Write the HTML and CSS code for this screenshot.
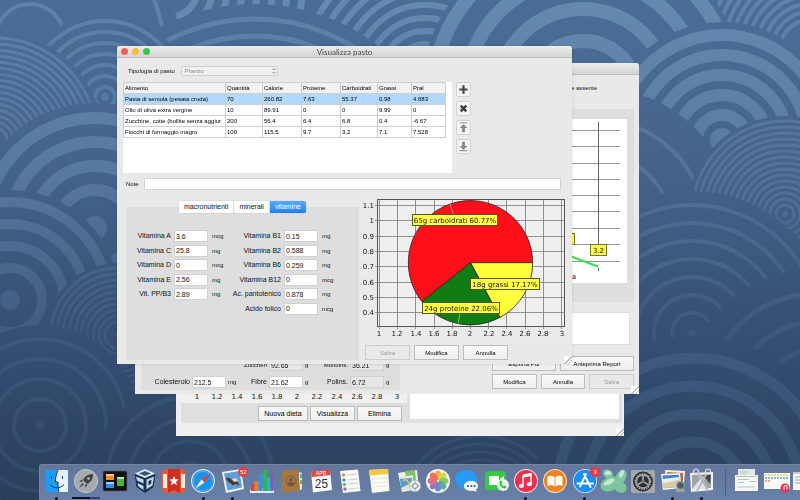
FILE: index.html
```html
<!DOCTYPE html>
<html lang="it">
<head>
<meta charset="utf-8">
<title>Visualizza pasto</title>
<link rel="stylesheet" href="styles.css">
</head>
<body>
<svg class="wallpaper" viewBox="0 0 800 500" preserveAspectRatio="xMidYMin slice" aria-hidden="true">
  <defs>
    <linearGradient id="sea" gradientUnits="userSpaceOnUse" x1="0" y1="0" x2="0" y2="500">
      <stop offset="0" stop-color="#4a6d98"/><stop offset=".35" stop-color="#446389"/><stop offset=".65" stop-color="#364f74"/><stop offset="1" stop-color="#293f5c"/>
    </linearGradient>
    <linearGradient id="foam" gradientUnits="userSpaceOnUse" x1="0" y1="0" x2="0" y2="500">
      <stop offset="0" stop-color="#6c91b5"/><stop offset=".35" stop-color="#5c7ea3"/><stop offset=".65" stop-color="#455f85"/><stop offset="1" stop-color="#34506f"/>
    </linearGradient>
  </defs>
  <rect width="800" height="500" fill="url(#sea)"/>
  <g id="waves"></g>
</svg>

<main class="desktop">

  <section class="window window-list" aria-label="Diete">
    <div class="list-body">
      <div class="list-left">
        <div class="axis-strip"><span>1</span><span>1.2</span><span>1.4</span><span>1.6</span><span>1.8</span><span>2</span><span>2.2</span><span>2.4</span><span>2.6</span><span>2.8</span><span>3</span></div>
        <div class="button-row list-buttons">
          <button class="btn btn-big btn-wide">Nuova dieta</button><button class="btn btn-big">Visualizza</button><button class="btn btn-big">Elimina</button>
        </div>
      </div>
      <div class="white-box list-box"></div>
    </div>
    <span class="grip"></span>
  </section>

  <section class="window window-diet" aria-label="Dieta">
    <header class="titlebar"></header>
    <p class="diet-note">Valore assente</p>
    <div class="diet-chart">
      <svg viewBox="0 0 80 164" role="img" aria-label="Andamento">
        <g stroke="#999" stroke-width="1"><path d="M0 11.500H73M0 27.500H73M0 44.500H73M0 60.500H73M0 76.500H73M0 92.500H73M0 109.500H73M0 125.500H73M0 142.500H73"/></g>
        <path d="M51.500 3V126M51.500 149v3" stroke="#666"/>
        <path d="M20 136 51 147.500" stroke="#2fe43f" stroke-width="2"/>
        <rect x="11.500" y="114.500" width="16" height="11" fill="#ffff46" stroke="#77772a"/>
        <rect x="43.500" y="125.500" width="16" height="11" fill="#ffff46" stroke="#77772a"/>
        <text x="51.500" y="134" class="tag-text">3.2</text>
        <text x="29" y="160" class="cat-text">Cena</text>
      </svg>
    </div>
    <div class="white-box diet-box"></div>
    <div class="diet-foot">
      <div class="diet-fields">
        <span></span><span></span><span></span>
        <label for="zuc">Zuccheri</label><input id="zuc" class="field off" value="92.65" readonly><span>g</span>
        <label for="mon">Monoins.</label><input id="mon" class="field off" value="36.21" readonly><span>g</span>
        <label for="col">Colesterolo</label><input id="col" class="field" value="212.5"><span>mg</span>
        <label for="fib">Fibre</label><input id="fib" class="field" value="21.62"><span>g</span>
        <label for="pol">Polins.</label><input id="pol" class="field off" value="6.72" readonly><span>g</span>
      </div>
      <div class="diet-actions">
        <div class="button-row"><button class="btn btn-grow">Esporta Pdf</button><button class="btn btn-report">Anteprima Report</button></div>
        <div class="button-row"><button class="btn btn-grow">Modifica</button><button class="btn btn-grow">Annulla</button><button class="btn btn-grow" disabled>Salva</button></div>
      </div>
    </div>
    <span class="grip"></span>
  </section>

  <section class="window window-meal" aria-label="Visualizza pasto">
    <header class="titlebar">
      <span class="lights"><i class="light red"></i><i class="light amber"></i><i class="light green"></i></span>
      <h1>Visualizza pasto</h1>
    </header>

    <div class="meal-type">
      <label for="tipo">Tipologia di pasto</label>
      <span class="select-wrap">
        <select id="tipo" disabled><option>Pranzo</option></select>
        <svg viewBox="0 0 6 8" aria-hidden="true"><path d="M1.500 3 3 1.500 4.500 3M1.500 5 3 6.500 4.500 5" fill="none" stroke="#888"/></svg>
      </span>
    </div>

    <div class="foods">
      <div class="table-pane">
        <table>
          <colgroup><col class="c-food"><col class="c-37"><col class="c-39"><col class="c-39"><col class="c-37"><col class="c-34"><col class="c-34"></colgroup>
          <thead><tr><th>Alimento</th><th>Quantità</th><th>Calorie</th><th>Proteine</th><th>Carboidrati</th><th>Grassi</th><th>Pral</th></tr></thead>
          <tbody>
            <tr class="selected"><td>Pasta di semola (pesata cruda)</td><td>70</td><td>260.82</td><td>7.63</td><td>55.37</td><td>0.98</td><td>4.683</td></tr>
            <tr><td>Olio di oliva extra vergine</td><td>10</td><td>89.91</td><td>0</td><td>0</td><td>9.99</td><td>0</td></tr>
            <tr><td>Zucchine, cotte (bollite senza aggiur</td><td>200</td><td>56.4</td><td>6.4</td><td>6.8</td><td>0.4</td><td>-6.67</td></tr>
            <tr><td>Fiocchi di formaggio magro</td><td>100</td><td>115.5</td><td>9.7</td><td>3.2</td><td>7.1</td><td>7.528</td></tr>
          </tbody>
        </table>
      </div>
      <div class="tools">
        <button class="tool" aria-label="Aggiungi"><svg viewBox="0 0 14 14"><path d="M7 2.500v9M2.500 7h9" stroke="#444" stroke-width="2.400"/></svg></button>
        <button class="tool" aria-label="Rimuovi"><svg viewBox="0 0 14 14"><path d="M4 4l6 6M10 4l-6 6" stroke="#3c3c3c" stroke-width="2.600"/></svg></button>
        <button class="tool" aria-label="Sposta in cima"><svg viewBox="0 0 14 14"><path d="M3 2h8" stroke="#888"/><path d="M7 3.500l4.200 4H8.500V12h-3V7.500H2.800z" fill="#888"/></svg></button>
        <button class="tool" aria-label="Sposta in fondo"><svg viewBox="0 0 14 14"><path d="M2.800 11.500h8.400" stroke="#777"/><path d="M7 10.500 2.800 6.500h2.700V2h3v4.500h2.700z" fill="#888"/></svg></button>
      </div>
    </div>

    <div class="note-row"><label for="note">Note</label><input id="note" type="text"></div>

    <div class="details">
      <div class="nutrients">
        <div class="tabs" role="tablist">
          <button role="tab" aria-selected="false">macronutrienti</button><button role="tab" aria-selected="false">minerali</button><button role="tab" aria-selected="true">vitamine</button>
        </div>
        <div class="tab-panel" role="tabpanel">
          <div class="vitamins">
            <label for="va">Vitamina A</label><input id="va" class="field" value="3.6"><span>mcg</span>
            <label for="vc">Vitamina C</label><input id="vc" class="field" value="25.8"><span>mg</span>
            <label for="vd">Vitamina D</label><input id="vd" class="field" value="0"><span>mcg</span>
            <label for="ve">Vitamina E</label><input id="ve" class="field" value="2.56"><span>mg</span>
            <label for="vp">Vit. PP/B3</label><input id="vp" class="field" value="2.89"><span>mg</span>
          </div>
          <div class="vitamins vitamins-b">
            <label for="b1">Vitamina B1</label><input id="b1" class="field" value="0.15"><span>mg</span>
            <label for="b2">Vitamina B2</label><input id="b2" class="field" value="0.588"><span>mg</span>
            <label for="b6">Vitamina B6</label><input id="b6" class="field" value="0.259"><span>mg</span>
            <label for="b12">Vitamina B12</label><input id="b12" class="field" value="0"><span>mcg</span>
            <label for="ap">Ac. pantotenico</label><input id="ap" class="field" value="0.878"><span>mg</span>
            <label for="af">Acido folico</label><input id="af" class="field" value="0"><span>mcg</span>
          </div>
        </div>
      </div>
      <div class="chart-side">
        <svg class="pie" viewBox="0 0 207 144" role="img" aria-label="Ripartizione dei macronutrienti">
          <rect width="207" height="144" fill="#eaeaea"/>
          <rect x="17.500" y="2.500" width="187" height="127" fill="#efefef" stroke="#555"/>
          <path d="M19.500 3v129M37.500 3v129M55.500 3v129M74.500 3v129M92.500 3v129M110.500 3v129M128.500 3v129M146.500 3v129M165.500 3v129M183.500 3v129M201.500 3v129M15 8.500h189M15 23.500h189M15 39.500h189M15 54.500h189M15 69.500h189M15 85.500h189M15 100.500h189M15 115.500h189" stroke="#777" stroke-width=".8" fill="none"/>
          <g stroke="#2a2020" stroke-width=".8">
            <path d="M110.500 65.700h62.200A62.200 62.200 0 1 0 62 104.700z" fill="#ff0f1a"/>
            <path d="M110.500 65.700h62.200A62.200 62.200 0 0 1 139.900 120.500z" fill="#ffff3c"/>
            <path d="M110.500 65.700 139.900 120.500A62.200 62.200 0 0 1 62 104.700z" fill="#107d12"/>
          </g>
          <path d="M90 7l4 12M100 116l-2 11M145 92l8 6" stroke="#fff" stroke-width=".6" opacity=".8"/>
          <g class="axis-y"><text x="14" y="11">1.1</text><text x="14" y="26">1</text><text x="14" y="42">0.9</text><text x="14" y="57">0.8</text><text x="14" y="72">0.7</text><text x="14" y="88">0.6</text><text x="14" y="103">0.5</text><text x="14" y="118">0.4</text></g>
          <g class="axis-x"><text x="19" y="139">1</text><text x="37" y="139">1.2</text><text x="56" y="139">1.4</text><text x="74" y="139">1.6</text><text x="92" y="139">1.8</text><text x="110" y="139">2</text><text x="129" y="139">2.2</text><text x="147" y="139">2.4</text><text x="165" y="139">2.6</text><text x="183" y="139">2.8</text><text x="202" y="139">3</text></g>
          <g fill="#ffff46" stroke="#55551c"><rect x="52.500" y="17.500" width="85" height="11"/><rect x="110.500" y="81.500" width="69" height="11"/><rect x="62.500" y="105.500" width="77" height="11"/></g>
          <g class="slice-text"><text x="95" y="26">65g carboidrati 60.77%</text><text x="145" y="90">18g grassi 17.17%</text><text x="101" y="114">24g proteine 22.06%</text></g>
        </svg>
        <div class="button-row meal-actions"><button class="btn" disabled>Salva</button><button class="btn">Modifica</button><button class="btn">Annulla</button></div>
      </div>
    </div>
    <span class="grip"></span>
  </section>
</main>

<nav class="dock" aria-label="Dock">
  <ul class="apps">
    <li class="running"><svg viewBox="0 0 24 24"><rect x="1" y="1" width="22" height="22" rx="1" fill="#e6f2fb"/><path d="M2 1h11c-2 4-2.600 8-2.600 12H13c0 4 .3 7 1 10H2a1 1 0 0 1-1-1V2a1 1 0 0 1 1-1z" fill="#1d9cf3"/><path d="M6.500 7v3M17.500 7v3M5 15.500c4 4.500 10 4.500 14 0M13 1.500c-2 4-2.600 8-2.600 11.500H13c0 4 .3 7 1 9.500" fill="none" stroke="#173b5c" stroke-width="1"/></svg></li>
    <li class="loading"><svg viewBox="0 0 24 24"><circle cx="12" cy="12" r="11.600" fill="#a6abb0" stroke="#d0d3d6" stroke-width=".8"/><path d="M19 5c-5 .2-8 2-10 6l4 4c4-2 6-5 6-10zM9 10.500l-4 1.800 3 .7zM13.500 15l-1.800 4-.8-3zM8.500 14 5 19l5-3.500z" fill="#3e4246"/><circle cx="14.500" cy="9.500" r="1.300" fill="#b5babd"/></svg></li>
    <li><svg viewBox="0 0 24 24"><rect x="0" y="2" width="24" height="20" rx="1" fill="#101214" stroke="#5b6570" stroke-width=".6"/><path d="M3 5h8v6H3z" fill="#f58e1f"/><path d="M3 13h8v6H3z" fill="#2e8de0"/><path d="M14 8h7v9h-7z" fill="#43b72f"/><path d="M3 5h8v2H3z" fill="#ffc681"/><path d="M3 13h8v2H3z" fill="#9bd2ff"/><path d="M14 8h7v2h-7z" fill="#b0ef9c"/></svg></li>
    <li><svg viewBox="0 0 24 24"><path d="M12 0 22.500 4.500 20.500 18 12 24 3.500 18 1.500 4.500z" fill="#17324f"/><path d="M12 0 22.500 4.500 12 9 1.500 4.500z" fill="#dfe9f1"/><path d="M12 2 18 4.500 12 7 6 4.500z" fill="#36577b"/><path d="M3 7.500l7.500 3v4L4 11.500zM4.500 14l6 3v4l-5-3.500zM21 7.500l-7.500 3v10l2-1.400 4-2.600zM15.500 12l3-1.300-.4 4-2.600 1.500z" fill="#c4d6e4" fill-rule="evenodd"/></svg></li>
    <li><svg viewBox="0 0 24 24"><rect width="24" height="24" rx="5" fill="#e85a35"/><path d="M1 5h4v14H1zM19 5h4v14h-4z" fill="#f8e9df"/><path d="M6 0h12v24l-6-3-6 3z" fill="#cf2f23"/><path d="M12 7l1.300 3.300 3.500.2-2.700 2.200.9 3.500-3-2-3 2 .9-3.500-2.700-2.200 3.500-.2z" fill="#fff"/></svg></li>
    <li class="running"><svg viewBox="0 0 24 24"><circle cx="12" cy="12" r="12" fill="#dde5eb"/><circle cx="12" cy="12" r="10.800" fill="#1e93e6"/><circle cx="12" cy="12" r="9.500" fill="none" stroke="#a8daf8" stroke-width="1" stroke-dasharray="1 1.500"/><path d="M20 4 13.500 13.500 10.500 10.500z" fill="#f03d31"/><path d="M4 20 10.500 10.500l3 3z" fill="#f4f6f8"/></svg></li>
    <li class="running"><svg viewBox="0 0 24 24"><path d="M1 3 20 0l3 20L5 24z" fill="#f1f3f4"/><path d="M3 4.500 18.500 2 21 18.500 6.500 21.500z" fill="#5d9ed6"/><path d="M5 9c3-1 5 1 6.500 2.500 2-1 3.500-.5 5 1.500l2 3.500-4-1.500-3 1.500-2-2.500-2.500-1z" fill="#4b3726"/><path d="M11 10l4-1 2 3-4 1z" fill="#e4dccb"/></svg><b class="badge">52</b></li>
    <li><svg viewBox="0 0 24 24"><path d="M0 21 2 19h20l2 3v2H0z" fill="#e9ecef"/><path d="M1 15h4v7H1z" fill="#e33f49"/><path d="M4.500 12h4v10h-4z" fill="#ef7b2d"/><path d="M8.500 5h4v17h-4z" fill="#3491e1"/><path d="M13 1h4v21h-4z" fill="#2fb652"/><path d="M17 9h3.500v13H17z" fill="#22b7c9"/><path d="M20.500 5H23v17h-2.500z" fill="#8652c4"/></svg></li>
    <li><svg viewBox="0 0 24 24"><path d="M20 3l3 1v16l-3 2z" fill="#e8e5d7"/><path d="M21 5h2v4h-2z" fill="#4fb1d5"/><path d="M21 11h2v4h-2z" fill="#7fb34c"/><path d="M3 1.500 19.500 0 21 22 4 24l-1.500-2z" fill="#a27846"/><circle cx="12" cy="12" r="5" fill="none" stroke="#7a5630" stroke-width=".9"/><circle cx="12" cy="10.500" r="1.800" fill="#7a5630"/><path d="M8.500 15c1-3 6-3 7 0-2 2.500-5 2.500-7 0z" fill="#7a5630"/></svg></li>
    <li><svg viewBox="0 0 24 24"><path d="M2 3 21 1l2 20-19 2.500z" fill="#f8f8f8"/><path d="M2 2.500 21 .5l.6 5.500-19 2z" fill="#e44a41"/><text class="cal-month" x="12" y="6">APR</text><text class="cal-day" x="12.500" y="19">25</text></svg></li>
    <li><svg viewBox="0 0 24 24"><path d="M2 2 20 .5 22.500 22 5 24z" fill="#fafafa"/><g stroke="#bbb" stroke-width=".7"><path d="M9 6l10-1M9.500 11l10-1M10 15l10-1M10.500 20l10-1"/></g><circle cx="5.500" cy="6" r="1.700" fill="#f28b2c"/><circle cx="6" cy="11" r="1.700" fill="#3f9be8"/><circle cx="6.500" cy="15.500" r="1.700" fill="#5ec34a"/><circle cx="7" cy="20" r="1.700" fill="#b15ad0"/></svg></li>
    <li><svg viewBox="0 0 24 24"><path d="M2 1 21 0l1.500 22L5 24z" fill="#faf9f3"/><path d="M2 1 21 0l.4 5L2.500 6.500z" fill="#f7c93a"/><path d="M4 10l17-1M4.500 14l17-1M5 18l17-1" stroke="#dedcd4" stroke-width=".6"/></svg></li>
    <li><svg viewBox="0 0 24 24"><path d="M1 4 20 1l2 19-17 3z" fill="#f2f0e8"/><path d="M8 2l10-1 1 10-10 2z" fill="#7ec267"/><path d="M2 8l14-2v14l-11 2z" fill="#e7e3d2"/><path d="M3 10l12-1-1 5-10 5z" fill="#4b9cdf"/><path d="M6 12c3-3 6 0 7 6" fill="none" stroke="#f0c03c" stroke-width="1.500"/><circle cx="18" cy="17" r="5.700" fill="#ecf0f1" stroke="#a5b0b6" stroke-width=".7"/><circle cx="18" cy="17" r="2.500" fill="none" stroke="#65808b" stroke-width=".9"/><path d="M18 12v3M18 19v3M13 17h3M20 17h3" stroke="#78919b" stroke-width=".6"/></svg></li>
    <li><svg viewBox="0 0 24 24"><circle cx="12" cy="12" r="12" fill="#f4f4f2"/><g opacity=".85"><ellipse cx="12" cy="6.300" rx="3.300" ry="4.800" fill="#f7a520"/><ellipse cx="12" cy="6.300" rx="3.300" ry="4.800" fill="#d4cf2d" transform="rotate(45 12 12)"/><ellipse cx="12" cy="6.300" rx="3.300" ry="4.800" fill="#7dc242" transform="rotate(90 12 12)"/><ellipse cx="12" cy="6.300" rx="3.300" ry="4.800" fill="#3ba683" transform="rotate(135 12 12)"/><ellipse cx="12" cy="6.300" rx="3.300" ry="4.800" fill="#4680c8" transform="rotate(180 12 12)"/><ellipse cx="12" cy="6.300" rx="3.300" ry="4.800" fill="#8662ae" transform="rotate(225 12 12)"/><ellipse cx="12" cy="6.300" rx="3.300" ry="4.800" fill="#d5597f" transform="rotate(270 12 12)"/><ellipse cx="12" cy="6.300" rx="3.300" ry="4.800" fill="#ed5a3b" transform="rotate(315 12 12)"/></g></svg></li>
    <li><svg viewBox="0 0 24 24"><path d="M11 1c6 0 11 4 11 9s-5 9-11 9c-1 0-2 0-3-.4L4 21l.6-4C2 15.500 0 13 0 10c0-5 5-9 11-9z" fill="#259bf5"/><path d="M16 12c4 0 7 2 7 5 0 1.600-.7 2.800-2 3.700l.4 2.300-2.600-1.300c-5 1-9.800-1-9.800-4.700 0-3 3-5 7-5z" fill="#f2f7fb"/><circle cx="13" cy="17" r="1.100" fill="#2c5f91"/><circle cx="16.300" cy="17" r="1.100" fill="#2c5f91"/><circle cx="19.600" cy="17" r="1.100" fill="#2c5f91"/></svg></li>
    <li><svg viewBox="0 0 24 24"><rect x="0" y="2" width="21" height="19" rx="4" fill="#32cb48"/><path d="M4 7h10v9H4zM15 10l4-3v8l-4-2z" fill="#fff"/><circle cx="18" cy="16" r="6" fill="#e9f7ea"/><path d="M15 12c-2 3 2 8 5.500 7.500l1-1.800-2-1.300-1.200.8c-1-.6-1.700-1.500-1.800-2.600l1-.8-.8-2z" fill="#30bd45"/></svg></li>
    <li class="running"><svg viewBox="0 0 24 24"><circle cx="12" cy="12" r="12" fill="#f4e8ec"/><circle cx="12" cy="12" r="11" fill="#ec2f4b"/><path d="M9 6.500l8-1.700v10.400" fill="none" stroke="#fff" stroke-width="1.500"/><path d="M9 5.800l8-1.700v3l-8 1.700z" fill="#fff"/><path d="M9 6.500V17" stroke="#fff" stroke-width="1.500"/><ellipse cx="7.300" cy="17" rx="2.500" ry="2" fill="#fff"/><ellipse cx="15.300" cy="15.300" rx="2.500" ry="2" fill="#fff"/></svg></li>
    <li><svg viewBox="0 0 24 24"><circle cx="12" cy="12" r="12" fill="#f3dfcb"/><circle cx="12" cy="12" r="11" fill="#f1831d"/><path d="M4.500 7.500C7 6.300 10 6.500 12 8.500c2-2 5-2.200 7.500-1v9.500c-2.500-1-5.500-1-7.500.8-2-1.800-5-1.800-7.500-.8z" fill="#fff"/><path d="M12 8.500v9" stroke="#f1831d" stroke-width=".9"/></svg></li>
    <li class="running"><svg viewBox="0 0 24 24"><circle cx="12" cy="12" r="12" fill="#d9ecfa"/><circle cx="12" cy="12" r="11.200" fill="#1c8df2"/><path d="M13 5 7 17.500M11 5l6.500 13M4.500 14.500H15M17.500 14.500h2.500" fill="none" stroke="#fff" stroke-width="1.900" stroke-linecap="round"/></svg><b class="badge">3</b></li>
    <li><svg viewBox="0 0 24 24"><g fill="#7ec49d"><ellipse cx="6" cy="5" rx="5.500" ry="4.300" transform="rotate(35 6 5)"/><ellipse cx="19" cy="8" rx="5" ry="8" transform="rotate(25 19 8)"/><ellipse cx="8" cy="15" rx="10" ry="7" transform="rotate(-25 8 15)"/><ellipse cx="18" cy="18" rx="7" ry="5.500" transform="rotate(28 18 18)"/></g><g fill="#c5e8d2"><ellipse cx="6" cy="4" rx="3" ry="2"/><ellipse cx="19.500" cy="5" rx="2" ry="4" transform="rotate(25 19.500 5)"/><ellipse cx="7" cy="13" rx="6" ry="2.500" transform="rotate(-25 7 13)"/></g></svg></li>
    <li><svg viewBox="0 0 24 24"><rect x="0" y="1" width="24" height="23" rx="1.500" fill="#a3a8ac"/><circle cx="12" cy="12.500" r="10" fill="#2d3033"/><circle cx="12" cy="12.500" r="7.500" fill="none" stroke="#babdbf" stroke-width="1.500" stroke-dasharray="1.500 .9"/><circle cx="12" cy="12.500" r="6.500" fill="none" stroke="#a5a9ac" stroke-width="1.300"/><path d="M12 12.500V6.500M12 12.500l-5 3M12 12.500l5 3" stroke="#c1c4c6" stroke-width="1.400"/><circle cx="12" cy="12.500" r="2" fill="#73787b"/></svg></li>
    <li class="running"><svg viewBox="0 0 24 24"><path d="M4 1l20 1-1 14-18 1z" fill="#f6eee0"/><path d="M6 3l16 1v11L6 15z" fill="#ad6d3e"/><path d="M0 5l19-1 1.500 15L2 21z" fill="#f3f5f5"/><path d="M1.500 6.500 17.800 5.700l1 12L3 19.300z" fill="#3f83ce"/><path d="M2 12l16-1 .8 6.700L3 19.300z" fill="#dccb9e"/><path d="M2 10l16-2v3L2 14z" fill="#e3f1fb"/><circle cx="19.500" cy="16.500" r="4.500" fill="#8b9092"/><circle cx="19.500" cy="16.500" r="3" fill="#4b5c66"/><path d="M15 20h9v3h-9z" fill="#9da19d"/></svg></li>
    <li class="running"><svg viewBox="0 0 24 24"><path d="M0 4l23-1v18L1 23z" fill="#f1f2f2"/><path d="M2 6l19-1v14L2 20z" fill="#a2a5a6"/><path d="M13 6h8l-1 9z" fill="#434749"/><path d="M2 20 12 8l4 12z" fill="#dde1e2"/><path d="M8 4l10 18M17 4 7 22" stroke="#d2d6d8" stroke-width="1.800"/><path d="M8 4l10 18M17 4 7 22" stroke="#6d7478" stroke-width=".5"/><circle cx="6" cy="2.500" r="2.500" fill="none" stroke="#dadddd" stroke-width="1.200"/><circle cx="18" cy="2.500" r="2.500" fill="none" stroke="#dadddd" stroke-width="1.200"/></svg></li>
  </ul>
  <ul class="files">
    <li><svg viewBox="0 0 24 24"><path d="M3 0h17v10H3z" fill="#e2e8e5"/><path d="M0 6h23v16H0z" fill="#f5f6f6"/><path d="M1 7h21v1H1zM3 10h11v1H3zM3 13h6v1H3zM15 12h6v1h-6z" fill="#b4c4ba"/><path d="M5 3h8M6 5h5M2 18h18" stroke="#a9bbb0" stroke-width=".8"/></svg></li>
    <li><svg viewBox="0 0 24 24"><path d="M0 4h26v16H0z" fill="#f7f8f8"/><path d="M1 6h24" stroke="#e5cb65" stroke-width="1.500" stroke-dasharray="2 1"/><path d="M1 9h24" stroke="#64a5c8" stroke-width="1.500" stroke-dasharray="2 1"/><path d="M1 12h5" stroke="#df9458" stroke-width="1.500" stroke-dasharray="2 1"/><circle cx="21" cy="19" r="4.500" fill="#e63450"/><path d="M20 21v-4l3-.5v4" fill="none" stroke="#fff" stroke-width=".9"/></svg></li>
    <li><svg viewBox="0 0 24 24"><path d="M0 3h24v18H0z" fill="#f4f5f5"/><path d="M0 3h24v2H0z" fill="#c7cacc"/><path d="M2 8h6M2 11h6M2 14h5" stroke="#a0a6ac"/></svg></li>
  </ul>
</nav>
<script src="waves.js"></script>
</body>
</html>
```
FILE: styles.css
```css
* { box-sizing: border-box; }
body {
  margin: 0;
  min-height: 100vh;
  overflow: hidden;
  background: #3a5478;
  color: #111;
  font: 6px/8px "Liberation Sans", Arial, sans-serif;
}
button, input, select { font: inherit; color: inherit; margin: 0; }
ul { list-style: none; margin: 0; padding: 0; }
svg { display: block; }

.wallpaper { position: fixed; inset: 0; width: 100%; height: 100%; }
.desktop { position: relative; min-height: 100vh; }

/* windows */
.window {
  position: absolute;
  display: flex;
  flex-direction: column;
  background: #e9e9e9;
  border-radius: 3px 3px 0 0;
}
.window-meal { left: 117px; top: 46px; width: 455px; height: 318px; box-shadow: 0 0 3px rgba(0, 0, 0, .15); }
.window-diet { left: 135px; top: 63px; width: 504px; height: 331px; }
.window-list { left: 176px; top: 110px; width: 448px; height: 326px; background: #efefef; }
.titlebar {
  flex: none;
  display: grid;
  grid-template-columns: 1fr auto 1fr;
  align-items: center;
  height: 12px;
  padding: 0 4px;
  border-bottom: 1px solid #bdbdbd;
  border-radius: 3px 3px 0 0;
  background: linear-gradient(#ececec, #d4d4d4);
}
.titlebar h1 { margin: 0; font: 400 8px/10px Lato, sans-serif; color: #444; }
.lights { display: flex; gap: 4px; }
.light { width: 7px; height: 7px; border-radius: 50%; }
.red { background: #f95c57; }
.amber { background: #f9bc40; }
.green { background: #34c64a; }
.grip {
  position: absolute;
  right: 0;
  bottom: 0;
  width: 8px;
  height: 8px;
  background: linear-gradient(135deg, #fff 50%, #bbb 50%, #bbb 58%, #fff 58%, #fff 70%, #bbb 70%, #bbb 78%, #fff 78%);
}

/* controls */
.btn {
  width: 45px;
  height: 15px;
  padding: 0;
  border: 1px solid #bcbcbc;
  border-radius: 0;
  background: linear-gradient(#fafafa, #eee);
  color: #000;
  white-space: nowrap;
}
.btn:disabled { color: #999; background: #e9e9e9; border-color: #cdcdcd; }
.btn-big { font-size: 7px; }
.btn-wide { width: 50px; }
.btn-grow { flex: 1; }
.btn-report { width: 74px; }
.button-row { display: flex; gap: 4px; }
.white-box { background: #fff; }
.field {
  width: 34px;
  height: 12px;
  padding: 0 0 0 1px;
  border: 1px solid #d0d0d0;
  border-radius: 0;
  background: #fff;
  font-size: 7px;
}
.field.off { background: #e7e7e7; }

/* meal window */
.meal-type { display: flex; align-items: center; gap: 6px; height: 10px; margin: 8px 0 6px 11px; }
.select-wrap { position: relative; width: 97px; }
.select-wrap select {
  display: block;
  appearance: none;
  width: 100%;
  height: 10px;
  padding: 0 3px;
  border: 1px solid #cfcfcf;
  border-radius: 2px;
  background: #f0f0f0;
  color: #888;
  opacity: 1;
}
.select-wrap svg { position: absolute; right: 1px; top: 1px; width: 6px; height: 8px; }
.foods { display: flex; gap: 4px; height: 91px; margin-left: 6px; }
.table-pane { width: 329px; background: #fff; }
table { width: 322px; table-layout: fixed; border-collapse: collapse; }
.c-food { width: 102px; }
.c-39 { width: 39px; }
.c-37 { width: 37px; }
.c-34 { width: 34px; }
th, td {
  height: 11px;
  padding: 0 0 0 1px;
  border: 1px solid #cfcfcf;
  overflow: hidden;
  text-align: left;
  font-weight: 400;
  white-space: nowrap;
  color: #000;
}
th { background: #f2f2f2; }
.selected td { background: #b2d8fe; }
.tools { display: flex; flex-direction: column; gap: 4px; }
.tool { width: 15px; height: 15px; padding: 0; border: 1px solid #d2d2d2; border-radius: 2px; background: #f4f4f4; }
.tool svg { width: 13px; height: 13px; }
.note-row { display: flex; align-items: center; gap: 5px; margin: 5px 11px 0 9px; }
.note-row input { flex: 1; height: 12px; border: 1px solid #d4d4d4; background: #fff; }

.details { display: flex; flex: 1; justify-content: space-between; padding: 7px 5px 4px 9px; }
.nutrients { display: flex; flex-direction: column; flex: 0 0 233px; padding-top: 4px; font-size: 7px; }
.tabs { display: flex; align-self: center; z-index: 1; margin: 0 0 -6px; border-radius: 2px; box-shadow: 0 0 1px #888; }
.tabs button { height: 12px; padding: 0 5px; border: 0; border-right: 1px solid #ddd; background: #fff; color: #111; }
.tabs button[aria-selected="true"] { border: 0; border-radius: 0 2px 2px 0; background: linear-gradient(#5cabf9, #207ff8); color: #fff; }
.tab-panel { display: flex; flex: 1; gap: 4px; align-items: flex-start; padding-top: 22px; background: #dedede; }
.vitamins { display: grid; grid-template-columns: 45px 34px 16px; grid-template-rows: repeat(6, 1fr); column-gap: 3px; align-items: center; height: 87px; }
.vitamins-b { grid-template-columns: 50px 34px 16px; }
.vitamins label { text-align: right; white-space: nowrap; }
.vitamins span { padding-left: 1px; font-size: 6px; }
.chart-side { flex: 0 0 207px; }
.meal-actions { margin: 4px 0 0 5px; }
.pie { width: 100%; }
.pie text, .tag-text, .cat-text { font: 7px "DejaVu Sans", sans-serif; fill: #111; }
.pie .axis-y, .cat-text { text-anchor: end; }
.pie .axis-x, .pie .slice-text, .tag-text { text-anchor: middle; }

/* diet window */
.diet-note { margin: 9px 42px 0 0; padding-bottom: 17px; text-align: right; line-height: 8px; }
.diet-chart { display: flex; justify-content: flex-end; margin: 0 5px 0 6px; padding: 10px 7px 19px 0; background: #dedede; }
.diet-chart svg { width: 80px; background: #fff; }
.diet-box { height: 33px; margin: 10px 9px 0 6px; border: 1px solid #ddd; }
.diet-foot { display: flex; justify-content: space-between; margin: 11px 5px 0 6px; }
.diet-fields {
  display: grid;
  grid-template-columns: 49px 34px 14px 23px 34px 14px 27px 34px 14px;
  grid-auto-rows: 12px;
  gap: 5px 2px;
  align-items: center;
  width: 259px;
  padding: 3px 0 2px;
  background: #dedede;
  white-space: nowrap;
}
.diet-fields label { text-align: right; font-size: 7px; }
.diet-fields label[for="zuc"], .diet-fields label[for="mon"] { font-size: 6px; }
.diet-actions { display: flex; flex-direction: column; gap: 3px; width: 142px; }

/* list window */
.list-body { display: flex; flex: 1; gap: 3px; margin: 0 2px 13px 5px; padding: 0 3px 2px 0; background: #dfdfdf; }
.list-left { display: flex; flex-direction: column; justify-content: flex-end; width: 226px; }
.axis-strip {
  display: grid;
  grid-template-columns: repeat(11, 1fr);
  flex: 1;
  align-items: end;
  padding: 0 0 2px 6px;
  background: #f0f0f0;
  text-align: center;
  font: 7px/8px "DejaVu Sans", sans-serif;
}
.list-buttons { gap: 2px; justify-content: flex-end; padding: 3px 5px 0 0; }
.list-box { flex: 1; margin-bottom: 2px; }

/* dock */
.dock {
  position: fixed;
  left: 39px;
  right: 0;
  bottom: 0;
  display: flex;
  height: 36px;
  padding: 4px 0 0 2px;
  overflow: hidden;
  border-top: 1px solid #74879f;
  border-left: 1px solid #74879f;
  border-radius: 3px 0 0 0;
  background: linear-gradient(#62769a, #6880a8);
}
.apps { display: grid; grid-template-columns: repeat(23, 1fr); flex: 0 0 89%; }
.apps li { position: relative; display: flex; flex-direction: column; align-items: center; gap: 4px; }
.dock svg { flex: none; width: 24px; height: 24px; overflow: visible; }
.running::after { content: ""; width: 3px; height: 3px; border-radius: 50%; background: #0d1524; }
.loading::after { content: ""; width: 28px; height: 2px; background: linear-gradient(90deg, #0b1130 65%, #35436a 65%); }
.badge {
  position: absolute;
  top: -2px;
  right: -1px;
  min-width: 10px;
  height: 10px;
  border-radius: 5px;
  background: #f0393f;
  color: #fff;
  font: 6px/10px "Liberation Sans", sans-serif;
  text-align: center;
}
.files { display: flex; flex: none; gap: 5px; height: 27px; margin-left: 8px; padding-left: 9px; border-left: 1px solid #4d6183; }
.cal-month { font: 5px "Liberation Sans", sans-serif; fill: #fff; text-anchor: middle; }
.cal-day { font: 12px "Liberation Sans", sans-serif; fill: #333; text-anchor: middle; }
```
FILE: waves.js
```js
// Each hill hides those before it: centre, disc radius, ring radii from outside in, ring width.
const hills = [
  { x: 170, y: -10, disc: 140, from: 132, step: 15, count: 8, width: 7 },
  { x: 30, y: 50, disc: 150, from: 134, step: 18, count: 1, width: 4 },
  { x: 425, y: 75, disc: 130, from: 122, step: 13, count: 9, width: 6 },
  { x: 810, y: 50, disc: 108, from: 102, step: 8, count: 10, width: 4 },
  { x: 583, y: 95, disc: 162, from: 150, step: 32, count: 5, width: 14 },
  { x: 255, y: 207, disc: 203, from: 188, step: 17, count: 9, width: 5 },
  { x: 30, y: 38, disc: 44, from: 34, step: 16, count: 1, width: 4 },
  { x: 105, y: 97, disc: 84, from: 76, step: 11, count: 7, width: 4 },
  { x: -5, y: 140, disc: 108, from: 102, step: 6, count: 16, width: 3 },
  { x: 722, y: 140, disc: 118, from: 105, step: 20, count: 5, width: 12 },
  { x: 595, y: 230, disc: 143, from: 111, step: 34, count: 3, width: 4 },
  { x: 785, y: 214, disc: 98, from: 93, step: 6, count: 15, width: 3 },
  { x: 692, y: 333, disc: 142, from: 128, step: 18, count: 7, width: 4 },
  { x: 815, y: 402, disc: 133, from: 108, step: 28, count: 4, width: 5 },
  { x: 95, y: 228, disc: 125, from: 110, step: 24, count: 4, width: 12 },
  { x: 10, y: 300, disc: 110, from: 98, step: 22, count: 4, width: 10 },
  { x: 118, y: 335, disc: 72, from: 67, step: 6, count: 10, width: 3 },
  { x: 40, y: 425, disc: 100, from: 86, step: 20, count: 4, width: 4 },
  { x: 190, y: 480, disc: 98, from: 83, step: 22, count: 4, width: 4 },
  { x: 480, y: 520, disc: 90, from: 84, step: 8, count: 9, width: 3 },
  { x: 693, y: 494, disc: 158, from: 136, step: 28, count: 5, width: 11 }
];
const layer = document.getElementById("waves");
const circle = (hill, r, attrs) => {
  const c = document.createElementNS("http://www.w3.org/2000/svg", "circle");
  Object.entries({ cx: hill.x, cy: hill.y, r, ...attrs }).forEach(([k, v]) => c.setAttribute(k, v));
  layer.append(c);
};
for (const hill of hills) {
  const opacity = hill.width < 6 ? 0.6 : 0.8;
  circle(hill, hill.disc, { fill: "url(#sea)" });
  for (let i = 0; i < hill.count; i++) {
    const r = hill.from - i * hill.step;
    if (r > 0) circle(hill, r, { fill: "none", stroke: "url(#foam)", "stroke-width": hill.width, opacity });
  }
  if (hill.count > 1) circle(hill, hill.width, { fill: "url(#foam)", opacity });
}
```
